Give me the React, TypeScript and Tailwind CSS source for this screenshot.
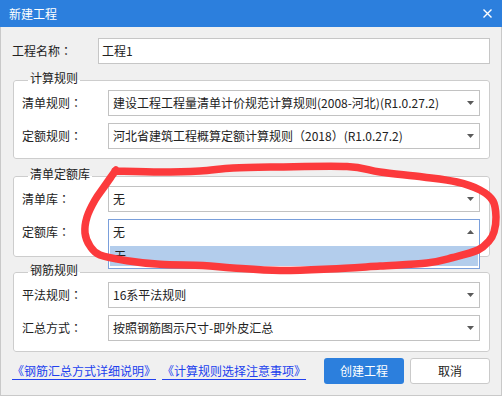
import React from 'react';

// hand-drawn red loop (stroke centre points, page coordinates)
const loop: [number, number][] = [
  [115, 171], [160, 172], [200, 171], [233, 168], [277, 167], [347, 166.5], [380, 172],
  [423, 177], [457, 182], [480, 190], [493, 201], [496, 217], [494, 232], [489, 241],
  [478, 250], [453, 257.5], [427, 263], [380, 266], [330, 269], [280, 270.5], [233, 268],
  [203, 265.5], [160, 264.3], [127, 260.7], [100, 255], [90, 246], [85, 233], [87, 217],
  [95, 200], [104, 187], [111, 177], [116, 170],
];

function smoothPath(pts: [number, number][]) {
  let d = `M ${pts[0][0]} ${pts[0][1]}`;
  for (let i = 0; i < pts.length - 1; i++) {
    const p0 = pts[Math.max(0, i - 1)];
    const p1 = pts[i];
    const p2 = pts[i + 1];
    const p3 = pts[Math.min(pts.length - 1, i + 2)];
    const c1x = p1[0] + (p2[0] - p0[0]) / 6;
    const c1y = p1[1] + (p2[1] - p0[1]) / 6;
    const c2x = p2[0] - (p3[0] - p1[0]) / 6;
    const c2y = p2[1] - (p3[1] - p1[1]) / 6;
    d += ` C ${c1x} ${c1y}, ${c2x} ${c2y}, ${p2[0]} ${p2[1]}`;
  }
  return d;
}

function Arrow({ up }: { up?: boolean }) {
  return (
    <svg width="7" height="4" viewBox="0 0 7 4" className="mr-[5px] shrink-0">
      <path d={up ? 'M0 4 L7 4 L3.5 0 Z' : 'M0 0 L7 0 L3.5 4 Z'} fill="#5a5a5a" />
    </svg>
  );
}

function Select({ value, open }: { value: string; open?: boolean }) {
  return (
    <div
      className={`relative flex h-[26px] flex-1 items-center border bg-white pl-[4px] ${
        open ? 'border-[#7a9fdb]' : 'border-[#c2c2c2]'
      }`}
    >
      <span className="flex-1 truncate">{value}</span>
      <Arrow up={open} />
      {open && (
        <div className="absolute left-[-1px] right-[-1px] top-full z-10 h-[25px] border-x border-b border-[#7a9fdb] bg-white px-[1px] pt-[2px]">
          <div className="flex h-[20px] items-center bg-[#b3cdec] pl-[4px]">无</div>
        </div>
      )}
    </div>
  );
}

// label with a centred full-width colon, as the original font draws it
function Label({ text }: { text: string }) {
  return (
    <span className="w-[86px] shrink-0">
      {text}
      <span className="font-['Noto_Sans_CJK_TC',sans-serif]">：</span>
    </span>
  );
}

function Row({ label, children }: { label: string; children: React.ReactNode }) {
  return (
    <div className="flex items-center">
      <Label text={label} />
      {children}
    </div>
  );
}

function Group({ title, className, children }: { title: string; className: string; children: React.ReactNode }) {
  return (
    <fieldset className={`ml-[1px] rounded-[3px] border border-[#cdcdcd] bg-white pl-[8px] pr-[9px] ${className}`}>
      <legend className="ml-[6px] h-[15px] px-[2px] leading-[15px]">
        <span className="relative -top-[3px]">{title}</span>
      </legend>
      <div className="flex flex-col gap-[7px]">{children}</div>
    </fieldset>
  );
}

export default function App() {
  return (
    <div className="relative flex h-[396px] w-[502px] flex-col overflow-hidden bg-[#f0f0f0] font-['Noto_Sans_CJK_SC','Noto_Sans',sans-serif] text-[12px] text-[#222]">
      <div className="flex h-[27px] shrink-0 items-center justify-between bg-[#2c7fdd] pl-[9px] pr-[10px] text-white">
        <span>新建工程</span>
        <svg width="9" height="9" viewBox="0 0 9 9">
          <path d="M0.5 0.5 L8.5 8.5 M8.5 0.5 L0.5 8.5" stroke="#fff" strokeWidth="1.4" />
        </svg>
      </div>

      <div className="flex flex-1 flex-col border-x border-b border-[#c9c9c9] px-[11px]">
        <div className="mt-[11px] flex items-center">
          <Label text="工程名称" />
          <div className="flex h-[26px] flex-1 items-center border border-[#c6c6c6] bg-white pl-[3px]">工程1</div>
        </div>

        <Group title="计算规则" className="mt-[9px] pt-[2px] pb-[9px]">
          <Row label="清单规则">
            <Select value="建设工程工程量清单计价规范计算规则(2008-河北)(R1.0.27.2)" />
          </Row>
          <Row label="定额规则">
            <Select value="河北省建筑工程概算定额计算规则（2018）(R1.0.27.2)" />
          </Row>
        </Group>

        <Group title="清单定额库" className="mt-[10px] pt-[2px] pb-[11px]">
          <Row label="清单库">
            <Select value="无" />
          </Row>
          <Row label="定额库">
            <Select value="无" open />
          </Row>
        </Group>

        <Group title="钢筋规则" className="mt-[8px] pt-[2px] pb-[10px]">
          <Row label="平法规则">
            <Select value="16系平法规则" />
          </Row>
          <Row label="汇总方式">
            <Select value="按照钢筋图示尺寸-即外皮汇总" />
          </Row>
        </Group>

        <div className="mt-[6px] flex items-center">
          <div className="flex flex-1 items-center gap-[6px] text-[#2140ee]">
            <a className="underline underline-offset-[3px]">《钢筋汇总方式详细说明》</a>
            <a className="underline underline-offset-[3px]">《计算规则选择注意事项》</a>
          </div>
          <button className="h-[26px] w-[80px] rounded-[3px] bg-[#2c7fdd] text-white">创建工程</button>
          <button className="ml-[6px] h-[26px] w-[80px] rounded-[3px] border border-[#cacaca] bg-white">取消</button>
        </div>
      </div>

      <svg className="pointer-events-none absolute left-0 top-0 z-20" width="502" height="396">
        <path d={smoothPath(loop)} fill="none" stroke="#fc3a3c" strokeWidth="7.5" strokeLinecap="round" strokeLinejoin="round" />
      </svg>
    </div>
  );
}
